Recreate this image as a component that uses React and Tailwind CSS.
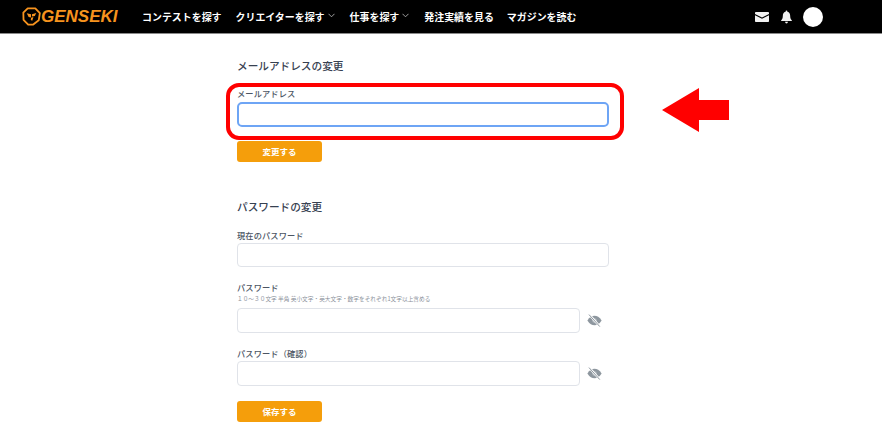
import React from "react";

const jp = "font-['Noto_Sans_CJK_JP','Noto_Sans',sans-serif]";

function Chevron() {
  return (
    <svg width="7" height="5" viewBox="0 0 7 5" className="ml-[3px] mb-[3px]" fill="none" stroke="#b0b0b0" strokeWidth="0.9">
      <path d="M0.5 0.8 L3.5 3.8 L6.5 0.8" />
    </svg>
  );
}

function Logo() {
  return (
    <svg width="19" height="19" viewBox="0 0 20 20" fill="none">
      <path d="M6 1.4 H14 L18.8 6.5 L17.6 14 L11.5 18.6 H6.5 L1.6 13.5 L1.4 6 Z" stroke="#f7931e" strokeWidth="1.9" strokeLinejoin="round" />
      <path d="M5 6.5 L9.5 7.6 L9.5 11 L7 10.5 Z M15 6.2 L10.5 7.6 L10.5 10 L13.5 9.4 Z M9.5 11.4 L12 10.6 L10.8 14.6 L9.3 13.6 Z" fill="#f7931e" />
    </svg>
  );
}

function EyeOff() {
  return (
    <svg width="15" height="13" viewBox="0 0 15 13" className="shrink-0">
      <path d="M0.4 6.5 C2.5 3 5 1.8 7.5 1.8 C10 1.8 12.5 3 14.6 6.5 C12.5 10 10 11.2 7.5 11.2 C5 11.2 2.5 10 0.4 6.5 Z" fill="#8d969e" />
      <circle cx="7.5" cy="6.5" r="2.3" fill="#b4bbc1" />
      <path d="M2.4 0.8 L12.6 12.2" stroke="#ffffff" strokeWidth="2.2" />
      <path d="M2 0.6 L12.8 12.6" stroke="#8d969e" strokeWidth="1" />
    </svg>
  );
}

function Label({ children, className = "" }) {
  return <label className={`block text-[8.2px] leading-[12px] font-medium text-[#4b5563] tracking-[0.15px] ${className}`}>{children}</label>;
}

function Input({ className = "" }) {
  return <input type="text" className={`block bg-white rounded-[4px] border border-[#e0e3e9] outline-none ${className}`} />;
}

function SaveButton({ children, className = "" }) {
  return (
    <button className={`flex items-center justify-center w-[85px] h-[21px] rounded-[3px] bg-[#f59e0b] text-white text-[8.5px] font-bold ${className}`}>
      {children}
    </button>
  );
}

const navClass = "flex items-center text-[9.95px] leading-[14px] font-bold text-white whitespace-nowrap";
const titleClass = "text-[10.65px] leading-[16px] font-medium text-[#374151]";

export default function App() {
  return (
    <div className={`relative w-[882px] h-[426px] overflow-hidden bg-white ${jp}`}>
      <header className="flex items-center h-[34px] bg-black border-b border-[#8a8a8a]">
        <div className="flex items-center ml-[22px] w-[97px]">
          <Logo />
          <span className="font-['Liberation_Sans',sans-serif] italic font-bold text-[17px] leading-none text-[#f7931e]">GENSEKI</span>
        </div>
        <nav className="flex items-center ml-[23px]">
          <a className={navClass}>コンテストを探す</a>
          <a className={`${navClass} ml-[14px]`}>クリエイターを探す<Chevron /></a>
          <a className={`${navClass} ml-[15px]`}>仕事を探す<Chevron /></a>
          <a className={`${navClass} ml-[15px]`}>発注実績を見る</a>
          <a className={`${navClass} ml-[13px]`}>マガジンを読む</a>
        </nav>
        <div className="ml-auto mr-[59px] flex items-center">
          <svg width="14" height="10" viewBox="0 0 14 10">
            <path d="M0 0.8 Q0 0 0.8 0 H13.2 Q14 0 14 0.8 V2 L7 5.4 L0 2 Z" fill="#f2f2f2" />
            <path d="M0 3.3 L7 6.8 L14 3.3 V9.2 Q14 10 13.2 10 H0.8 Q0 10 0 9.2 Z" fill="#f2f2f2" />
          </svg>
          <svg width="11" height="14" viewBox="0 0 12 14" className="ml-[12px]">
            <path d="M6 0 Q7 0 7 1.2 C9.2 1.7 10 3.5 10 5.6 C10 8 10.6 9.3 11.8 10.6 V11.4 H0.2 V10.6 C1.4 9.3 2 8 2 5.6 C2 3.5 2.8 1.7 5 1.2 Q5 0 6 0 Z" fill="#f2f2f2" />
            <path d="M4.4 12.2 H7.6 Q7.4 14 6 14 Q4.6 14 4.4 12.2 Z" fill="#f2f2f2" />
          </svg>
          <div className="ml-[11px] w-[20px] h-[20px] rounded-full bg-white" />
        </div>
      </header>

      <main className="ml-[237px] w-[372px] pt-[24px]">
        <h2 className={titleClass}>メールアドレスの変更</h2>
        <Label className="mt-[13px]">メールアドレス</Label>
        <input type="text" className="block mt-[3px] w-[372px] h-[25px] bg-white rounded-[5px] border-2 border-[#6ea5f5] outline-none" />
        <SaveButton className="mt-[14px]">変更する</SaveButton>

        <h2 className={`mt-[37px] ${titleClass}`}>パスワードの変更</h2>
        <Label className="mt-[14px]">現在のパスワード</Label>
        <Input className="mt-[2px] w-[372px] h-[24px]" />

        <Label className="mt-[14px]">パスワード</Label>
        <p className="mt-[1px] text-[5.7px] leading-[10px] text-[#8b919b] whitespace-nowrap">１０～３０文字 半角 英小文字・英大文字・数字をそれぞれ1文字以上含める</p>
        <div className="flex items-center gap-[7px] mt-[4px]">
          <Input className="w-[343px] h-[25px]" />
          <EyeOff />
        </div>

        <Label className="mt-[14px]">パスワード（確認）</Label>
        <div className="flex items-center gap-[7px] mt-[2px]">
          <Input className="w-[343px] h-[25px]" />
          <EyeOff />
        </div>
        <SaveButton className="mt-[15px]">保存する</SaveButton>
      </main>

      <div className="absolute left-[226px] top-[83px] w-[398px] h-[57px] border-[4px] border-[#ff0000] rounded-[13px] pointer-events-none" />
      <svg className="absolute left-[662px] top-[88px]" width="67" height="44" viewBox="0 0 67 44">
        <path d="M0 22 L37 0 V12 H67 V32 H37 V44 Z" fill="#ff0000" />
      </svg>
    </div>
  );
}
